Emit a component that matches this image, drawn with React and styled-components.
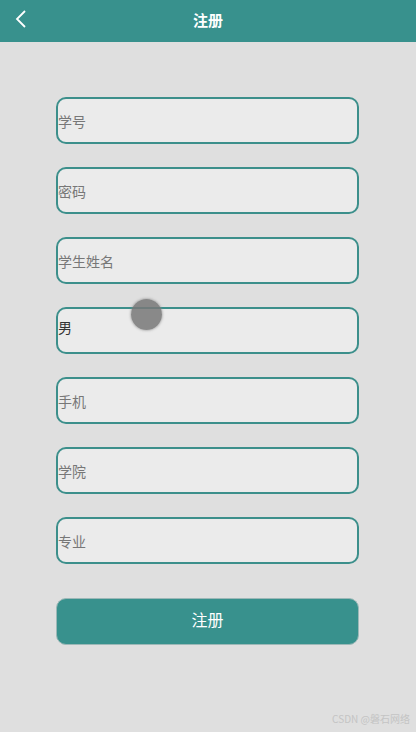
import React from "react";
import styled, { createGlobalStyle } from "styled-components";

const Global = createGlobalStyle`
  html, body { margin: 0; padding: 0; }
  body { background: #dfdfdf; font-family: "Microsoft YaHei", "Noto Sans CJK SC", "Liberation Sans", sans-serif; }
  * { box-sizing: border-box; }
`;

const Page = styled.div`
  position: relative;
  width: 416px;
  height: 732px;
  background: #dfdfdf;
  overflow: hidden;
`;

const Header = styled.header`
  height: 42px;
  background: #38918d;
  display: grid;
  grid-template-columns: 40px 1fr 40px;
  align-items: center;
  padding-bottom: 4px;
`;

const Back = styled.div`
  display: flex;
  justify-content: center;
  padding-left: 2px;
`;

const Title = styled.h1`
  margin: 0;
  color: #fff;
  font-size: 15px;
  font-weight: bold;
  line-height: 1;
  text-align: center;
`;

const Form = styled.div`
  display: flex;
  flex-direction: column;
  gap: 23px;
  padding: 55px 0 0 56px;
`;

const Field = styled.div`
  width: 303px;
  height: 47px;
  border: 2px solid #3c8f8b;
  border-radius: 10px;
  background: #ebebeb;
  display: flex;
  align-items: ${(p) => (p.$top ? "flex-start" : "center")};
  padding-top: ${(p) => (p.$top ? "8px" : "0")};
  font-size: 14px;
  color: ${(p) => (p.$value ? "#333" : "#777")};
`;

const Button = styled.button`
  margin-top: 11px;
  width: 303px;
  height: 47px;
  border: 1px solid #9cb8b7;
  border-radius: 10px;
  background: #38918d;
  color: #fff;
  font-size: 16px;
  font-family: inherit;
  padding: 0 0 5px;
`;

const Touch = styled.div`
  position: absolute;
  left: 131px;
  top: 299px;
  width: 31px;
  height: 31px;
  border-radius: 50%;
  background: rgba(120, 120, 120, 0.85);
  box-shadow: 0 0 2px 1px rgba(140,140,140,0.5);
`;

const Watermark = styled.div`
  position: absolute;
  right: 6px;
  bottom: 6px;
  font-size: 10px;
  color: #c4c4c4;
`;

const fields = [
  { t: "学号" },
  { t: "密码" },
  { t: "学生姓名" },
  { t: "男", value: true, top: true },
  { t: "手机" },
  { t: "学院" },
  { t: "专业" },
];

export default function App() {
  return (
    <Page>
      <Global />
      <Header>
        <Back>
          <svg width="14" height="20" viewBox="0 0 14 20">
            <path d="M11 2 L3 10 L11 18" fill="none" stroke="#fff" strokeWidth="1.8" />
          </svg>
        </Back>
        <Title>注册</Title>
        <span />
      </Header>
      <Form>
        {fields.map((f) => (
          <Field key={f.t} $value={f.value} $top={f.top}>{f.t}</Field>
        ))}
        <Button>注册</Button>
      </Form>
      <Touch />
      <Watermark>CSDN @磐石网络</Watermark>
    </Page>
  );
}
